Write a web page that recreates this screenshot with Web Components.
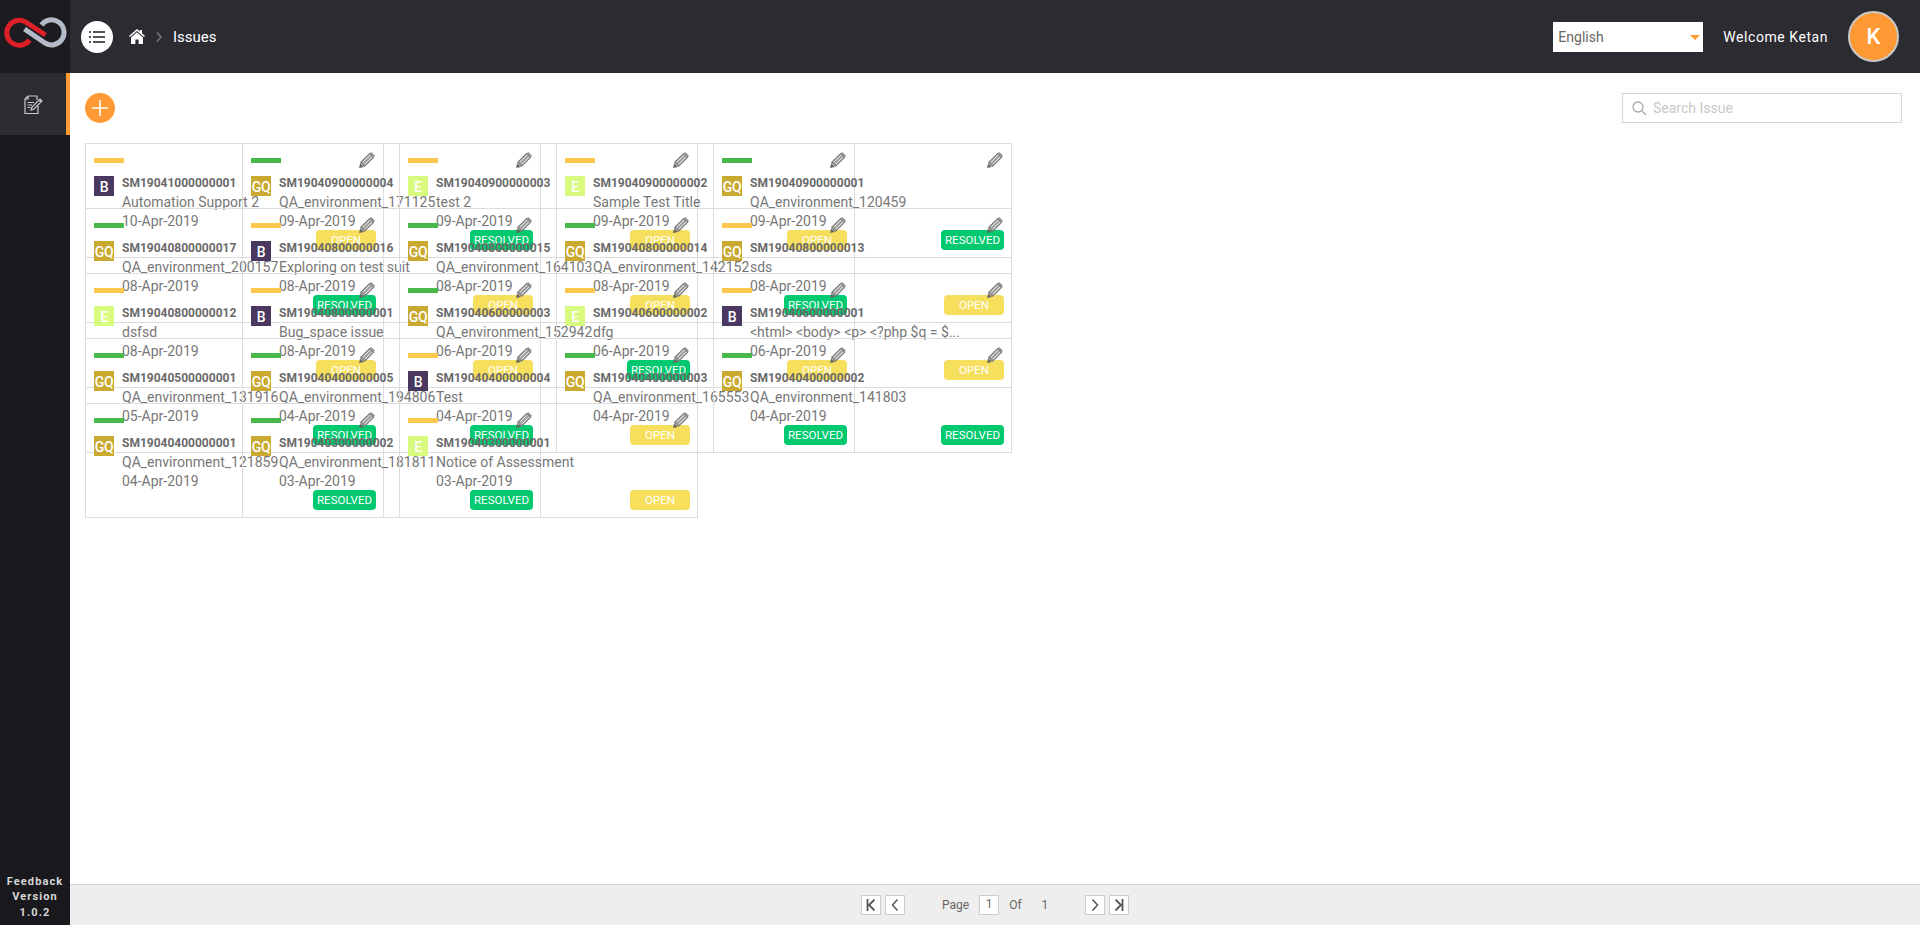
<!DOCTYPE html>
<html>
<head>
<meta charset="utf-8">
<title>Issues</title>
<style>
html, body { margin: 0; height: 100%; }
body { font-family: Roboto, "Liberation Sans", sans-serif; overflow: hidden; }
</style>
</head>
<body>
<app-shell>
  <side-bar slot="side"></side-bar>
  <top-bar slot="top" title-text="Issues" user="Ketan"></top-bar>
  <issue-toolbar></issue-toolbar>
  <issue-grid id="grid"></issue-grid>
  <page-bar slot="bottom"></page-bar>
</app-shell>

<script>
class AppShell extends HTMLElement {
    constructor() {
        super();
        this.attachShadow({mode: 'open'}).innerHTML = `
<style>
:host { display: flex; height: 925px; background: #fff; }
.main { flex: 1; display: flex; flex-direction: column; min-width: 0; }
.content { flex: 1; padding: 20px 18px 0 15px; min-height: 0; }
</style>
<slot name="side"></slot>
<div class="main">
    <slot name="top"></slot>
    <div class="content"><slot></slot></div>
    <slot name="bottom"></slot>
</div>`;
    }
}

class SideBar extends HTMLElement {
    constructor() {
        super();
        this.attachShadow({mode: 'open'}).innerHTML = `
<style>
:host { display: flex; flex-direction: column; width: 70px; background: #18181d; flex: none; }
.logo { height: 73px; background: #1b1b20; display: flex; align-items: center; justify-content: center; }
.item { height: 62px; background: #2b2b31; border-right: 4px solid #ff9933; box-sizing: border-box; display: flex; align-items: center; justify-content: center; padding-top: 2px; }
.ver { margin-top: auto; padding-bottom: 5px; text-align: center; color: #d8d8d8; font: 700 11px/15.5px Roboto, sans-serif; letter-spacing: 1.1px; }
</style>
<div class="logo">
  <svg width="70" height="73" viewBox="0 0 70 73" fill="none" stroke-width="5">
    <path d="M24.5 29 L45.5 43.3 A12.5 12.5 0 1 0 41.5 25" stroke="#b5bac8"/>
    <path d="M45.5 35 L25.5 22 A12.5 12.5 0 1 0 29.5 40" stroke="#dc2027"/>
  </svg>
</div>
<div class="item">
  <svg width="20" height="20" viewBox="0 0 20 20" fill="none" stroke="#c9c9c9" stroke-width="1.2">
    <path d="M5 1 H14 V5 M5 1 L2 4 V18.5 H15 V11"/>
    <path d="M5 1 V4 H2"/>
    <path d="M4.5 7.5 H11 M4.5 10 H9 M4.5 12.5 H7.5"/>
    <path d="M8 15 L9 12 L17 4 L19 6 L11 14 Z M16 5 L18 7"/>
  </svg>
</div>
<div class="ver">Feedback<br>Version<br>1.0.2</div>`;
    }
}

class TopBar extends HTMLElement {
    constructor() {
        super();
        const title = this.getAttribute('title-text');
        const user = this.getAttribute('user');
        this.attachShadow({mode: 'open'}).innerHTML = `
<style>
:host { display: flex; align-items: center; height: 73px; background: #2b2b31; color: #fff; font: 400 15px Roboto, sans-serif; flex: none; }
.menu { width: 32px; height: 32px; border-radius: 50%; background: #fff; margin-left: 11px; display: flex; align-items: center; justify-content: center; }
.home { margin-left: 16px; display: block; }
.chev { margin: 0 11px 0 11px; display: block; }
.right { margin-left: auto; display: flex; align-items: center; }
.lang { width: 150px; height: 30px; background: #fff; color: #666; font-size: 14px; display: flex; align-items: center; justify-content: space-between; padding: 0 3px 0 5px; box-sizing: border-box; }
.arrow { width: 0; height: 0; border: 5px solid transparent; border-top: 5px solid #ff9933; border-bottom: 0; margin-top: 1px; }
.welcome { margin-left: 20px; font-size: 14px; letter-spacing: .55px; }
.avatar { width: 51px; height: 51px; box-sizing: border-box; border: 2px solid #c9c9c9; border-radius: 50%; background: #ff9933; margin: 0 21px 0 20px; display: flex; align-items: center; justify-content: center; font-size: 22px; font-weight: 500; }
</style>
<div class="menu">
  <svg width="16" height="12" viewBox="0 0 16 12" fill="#555">
    <rect x="0" y="0" width="2" height="2"/><rect x="4" y="0" width="12" height="2"/>
    <rect x="0" y="5" width="2" height="2"/><rect x="4" y="5" width="12" height="2"/>
    <rect x="0" y="10" width="2" height="2"/><rect x="4" y="10" width="12" height="2"/>
  </svg>
</div>
<svg class="home" width="16" height="15" viewBox="0 0 16 15" fill="#fff">
  <path d="M8 0 L11 2.6 V1 H13 V4.3 L16 7 L15 8 L8 1.9 L1 8 L0 7 Z"/>
  <path d="M8 3.2 L14 8.4 V15 H9.6 V10.5 H6.4 V15 H2 V8.4 Z"/>
</svg>
<svg class="chev" width="6" height="10" viewBox="0 0 6 10" fill="none" stroke="#777" stroke-width="1.6"><path d="M1 0.5 L5 5 L1 9.5"/></svg>
<span>${title}</span>
<div class="right">
  <div class="lang"><span>English</span><span class="arrow"></span></div>
  <span class="welcome">Welcome ${user}</span>
  <div class="avatar">${user[0]}</div>
</div>`;
    }
}

class IssueToolbar extends HTMLElement {
    constructor() {
        super();
        this.attachShadow({mode: 'open'}).innerHTML = `
<style>
:host { display: flex; align-items: center; justify-content: space-between; height: 30px; margin-bottom: 20px; }
.add { width: 30px; height: 30px; border-radius: 50%; background: #ff9933; display: flex; align-items: center; justify-content: center; }
.search { width: 280px; height: 30px; box-sizing: border-box; border: 1.5px solid #d6d6d6; display: flex; align-items: center; padding-left: 9px; gap: 6px; color: #c8c8c8; font: 400 14px Roboto, sans-serif; }
</style>
<div class="add">
  <svg width="16" height="16" viewBox="0 0 16 16" stroke="#fff" stroke-width="1.6"><path d="M8 0 V16 M0 8 H16"/></svg>
</div>
<div class="search">
  <svg width="15" height="15" viewBox="0 0 15 15" fill="none" stroke="#aaa" stroke-width="1.3"><circle cx="6" cy="6" r="5"/><path d="M9.8 9.8 L14 14"/></svg>
  <span>Search Issue</span>
</div>`;
    }
}

const cardTemplate = document.createElement('template');
cardTemplate.innerHTML = `
<style>
:host { display: block; width: 299px; height: 115px; box-sizing: border-box; border: 1px solid #dcdcdc; padding: 8px 7px 0 8px; color: #777; font: 400 14px/19px Roboto, sans-serif; }
.top { display: flex; align-items: center; justify-content: space-between; height: 16px; margin-bottom: 6px; }
.bar { width: 30px; height: 5px; }
.pencil { margin-right: 1px; display: block; flex: none; }
.body { display: flex; height: 57px; margin-bottom: -1px; }
.tile { width: 20px; height: 20px; flex: none; margin: 2px 8px 0 0; color: #fff; font-size: 14px; font-weight: 500; line-height: 22px; text-align: center; letter-spacing: -.4px; }
.text { white-space: nowrap; }
.id { font-size: 12px; font-weight: 700; color: #6a6a6a; }
.foot { display: flex; justify-content: flex-end; }
.badge { min-width: 52px; padding: 0 4px; height: 20px; border-radius: 4px; color: #fff; font-size: 11.5px; line-height: 20px; text-align: center; }
</style>
<div class="top">
  <div class="bar"></div>
  <svg class="pencil" width="17" height="17" viewBox="0 0 16 16">
    <path d="M1 15 L2 10.5 L5.5 14 Z" fill="#666"/>
    <path d="M2.5 9.8 L11 1.3 L14.7 5 L6.2 13.5 Z" fill="#a2a2a2" stroke="#7a7a7a" stroke-width="1"/>
    <path d="M4.7 9.5 L11.5 2.7 M6.6 11.4 L13.4 4.6" stroke="#eee" stroke-width=".9"/>
    <path d="M11.8 0.6 L15.4 4.2" stroke="#8d8d8d" stroke-width="1.6"/>
  </svg>
</div>
<div class="body">
  <div class="tile"></div>
  <div class="text">
    <div class="id"></div>
    <div class="desc"></div>
    <div class="date"></div>
  </div>
</div>
<div class="foot"><div class="badge"></div></div>
`;

const tileColors = { B: '#4a3860', GQ: '#c9a92f', E: '#d8fb7f' };
const barColors = { green: '#48b84a', yellow: '#fec84f' };
const badgeColors = { OPEN: '#f7df5e', RESOLVED: '#00c96f' };

class IssueCard extends HTMLElement {
    constructor() {
        super();
        this.attachShadow({mode: 'open'});
        this.shadowRoot.appendChild(cardTemplate.content.cloneNode(true));
    }
    connectedCallback() {
        const r = this.shadowRoot;
        const tile = this.getAttribute('tile');
        const status = this.getAttribute('status');
        r.querySelector('.bar').style.background = barColors[this.getAttribute('bar')];
        r.querySelector('.tile').textContent = tile;
        r.querySelector('.tile').style.background = tileColors[tile];
        r.querySelector('.id').textContent = this.getAttribute('issue');
        r.querySelector('.desc').textContent = this.getAttribute('desc');
        r.querySelector('.date').textContent = this.getAttribute('date');
        r.querySelector('.badge').textContent = status;
        r.querySelector('.badge').style.background = badgeColors[status];
    }
}

// cards are wider and taller than their grid cell, that overlap is in the reference
class IssueGrid extends HTMLElement {
    constructor() {
        super();
        this.attachShadow({mode: 'open'}).innerHTML = `
<style>
:host { display: grid; grid-template-columns: repeat(5, 157px); grid-auto-rows: 65px; justify-content: start; }
</style>
<slot></slot>`;
    }
}

class PageBar extends HTMLElement {
    constructor() {
        super();
        this.attachShadow({mode: 'open'}).innerHTML = `
<style>
:host { display: flex; align-items: center; height: 41px; box-sizing: border-box; border-top: 1px solid #d4d4d4; background: #eee; color: #666; font: 400 12px Roboto, sans-serif; padding-left: 791px; flex: none; }
.b { width: 20px; height: 20px; box-sizing: border-box; border: 1px solid #ccc; background: #fff; display: flex; align-items: center; justify-content: center; flex: none; }
.gap4 { margin-left: 4px; }
.page { margin-left: 37px; }
.num { margin-left: 10px; font-size: 12px; padding-bottom: 2px; }
.of { margin-left: 10px; }
.one { margin-left: 20px; }
.next { margin-left: 37px; }
svg { display: block; }
</style>
<div class="b"><svg width="10" height="12" viewBox="0 0 10 12" fill="none" stroke="#555" stroke-width="1.8"><path d="M1.5 0 V12 M8.5 0.5 L3 6 L8.5 11.5"/></svg></div>
<div class="b gap4"><svg width="8" height="12" viewBox="0 0 8 12" fill="none" stroke="#555" stroke-width="1.5"><path d="M6.5 0.5 L1.5 6 L6.5 11.5"/></svg></div>
<span class="page">Page</span>
<div class="b num">1</div>
<span class="of">Of</span>
<span class="one">1</span>
<div class="b next"><svg width="8" height="12" viewBox="0 0 8 12" fill="none" stroke="#555" stroke-width="1.5"><path d="M1.5 0.5 L6.5 6 L1.5 11.5"/></svg></div>
<div class="b gap4"><svg width="10" height="12" viewBox="0 0 10 12" fill="none" stroke="#555" stroke-width="1.8"><path d="M8.5 0 V12 M1.5 0.5 L7 6 L1.5 11.5"/></svg></div>`;
    }
}

customElements.define('app-shell', AppShell);
customElements.define('side-bar', SideBar);
customElements.define('top-bar', TopBar);
customElements.define('issue-toolbar', IssueToolbar);
customElements.define('issue-card', IssueCard);
customElements.define('issue-grid', IssueGrid);
customElements.define('page-bar', PageBar);

const issues = [
    ['SM19041000000001', 'Automation Support 2', '10-Apr-2019', 'B', 'yellow', 'OPEN'],
    ['SM19040900000004', 'QA_environment_171125', '09-Apr-2019', 'GQ', 'green', 'RESOLVED'],
    ['SM19040900000003', 'test 2', '09-Apr-2019', 'E', 'yellow', 'OPEN'],
    ['SM19040900000002', 'Sample Test Title', '09-Apr-2019', 'E', 'yellow', 'OPEN'],
    ['SM19040900000001', 'QA_environment_120459', '09-Apr-2019', 'GQ', 'green', 'RESOLVED'],
    ['SM19040800000017', 'QA_environment_200157', '08-Apr-2019', 'GQ', 'green', 'RESOLVED'],
    ['SM19040800000016', 'Exploring on test suit', '08-Apr-2019', 'B', 'yellow', 'OPEN'],
    ['SM19040800000015', 'QA_environment_164103', '08-Apr-2019', 'GQ', 'green', 'OPEN'],
    ['SM19040800000014', 'QA_environment_142152', '08-Apr-2019', 'GQ', 'green', 'RESOLVED'],
    ['SM19040800000013', 'sds', '08-Apr-2019', 'GQ', 'yellow', 'OPEN'],
    ['SM19040800000012', 'dsfsd', '08-Apr-2019', 'E', 'yellow', 'OPEN'],
    ['SM19040800000001', 'Bug_space issue', '08-Apr-2019', 'B', 'yellow', 'OPEN'],
    ['SM19040600000003', 'QA_environment_152942', '06-Apr-2019', 'GQ', 'green', 'RESOLVED'],
    ['SM19040600000002', 'dfg', '06-Apr-2019', 'E', 'yellow', 'OPEN'],
    ['SM19040600000001', '<html> <body> <p> <?php $q = $...', '06-Apr-2019', 'B', 'yellow', 'OPEN'],
    ['SM19040500000001', 'QA_environment_131916', '05-Apr-2019', 'GQ', 'green', 'RESOLVED'],
    ['SM19040400000005', 'QA_environment_194806', '04-Apr-2019', 'GQ', 'green', 'RESOLVED'],
    ['SM19040400000004', 'Test', '04-Apr-2019', 'B', 'yellow', 'OPEN'],
    ['SM19040400000003', 'QA_environment_165553', '04-Apr-2019', 'GQ', 'green', 'RESOLVED'],
    ['SM19040400000002', 'QA_environment_141803', '04-Apr-2019', 'GQ', 'green', 'RESOLVED'],
    ['SM19040400000001', 'QA_environment_121859', '04-Apr-2019', 'GQ', 'green', 'RESOLVED'],
    ['SM19040300000002', 'QA_environment_181811', '03-Apr-2019', 'GQ', 'green', 'RESOLVED'],
    ['SM19040300000001', 'Notice of Assessment', '03-Apr-2019', 'E', 'yellow', 'OPEN']
];

const grid = document.getElementById('grid');
issues.forEach(i => {
    const card = document.createElement('issue-card');
    card.setAttribute('issue', i[0]);
    card.setAttribute('desc', i[1]);
    card.setAttribute('date', i[2]);
    card.setAttribute('tile', i[3]);
    card.setAttribute('bar', i[4]);
    card.setAttribute('status', i[5]);
    grid.appendChild(card);
});
</script>
</body>
</html>
